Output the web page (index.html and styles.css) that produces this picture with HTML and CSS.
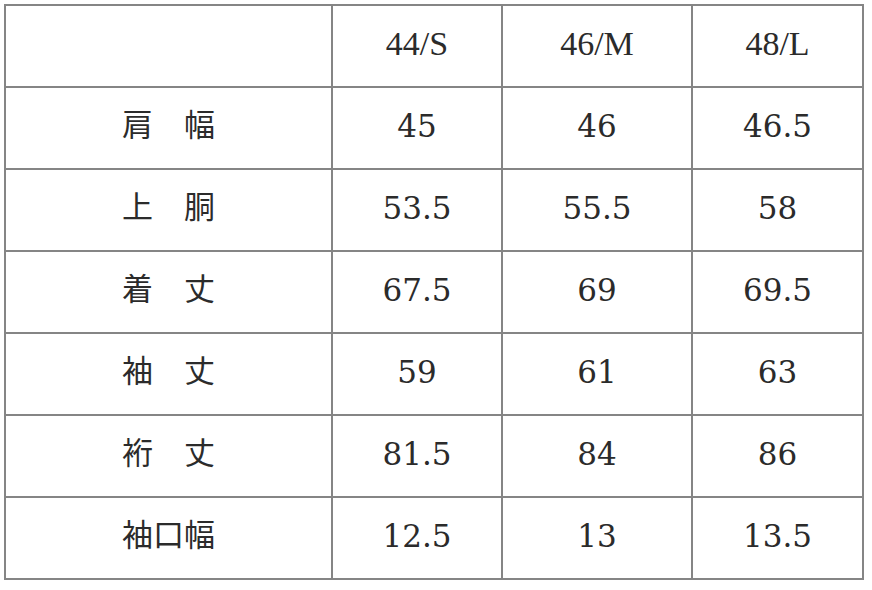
FILE: index.html
```html
<!DOCTYPE html>
<html lang="ja">
<head>
<meta charset="utf-8">
<link rel="stylesheet" href="styles.css">
</head>
<body>
<table class="size-table">
  <colgroup>
    <col class="c1"><col class="c2"><col class="c3"><col class="c4">
  </colgroup>
  <tr class="head"><td></td><td>44/S</td><td>46/M</td><td>48/L</td></tr>
  <tr><th>肩　幅</th><td>45</td><td>46</td><td>46.5</td></tr>
  <tr><th>上　胴</th><td>53.5</td><td>55.5</td><td>58</td></tr>
  <tr><th>着　丈</th><td>67.5</td><td>69</td><td>69.5</td></tr>
  <tr><th>袖　丈</th><td>59</td><td>61</td><td>63</td></tr>
  <tr><th>裄　丈</th><td>81.5</td><td>84</td><td>86</td></tr>
  <tr><th>袖口幅</th><td>12.5</td><td>13</td><td>13.5</td></tr>
</table>
</body>
</html>
```
FILE: styles.css
```css
html, body {
  background: #ffffff;
}
body {
  margin: 4px;
}
.size-table {
  border-collapse: collapse;
  table-layout: fixed;
  width: 860px;
  color: #2b2b2b;
}
.c1 { width: 327px; }
.c2 { width: 170px; }
.c3 { width: 190px; }
.c4 { width: 171px; }
.size-table tr {
  height: 82px;
}
.size-table th,
.size-table td {
  border: 2px solid #858585;
  padding: 0 0 5px 0;
  text-align: center;
  vertical-align: middle;
}
.size-table td {
  font-family: "DejaVu Serif", serif;
  font-size: 31px;
}
.size-table th {
  font-family: "Noto Sans CJK JP", sans-serif;
  font-weight: normal;
  font-size: 31px;
  padding-bottom: 11px;
}
.size-table .head td {
  font-family: "Liberation Serif", serif;
  font-size: 34px;
}
```
